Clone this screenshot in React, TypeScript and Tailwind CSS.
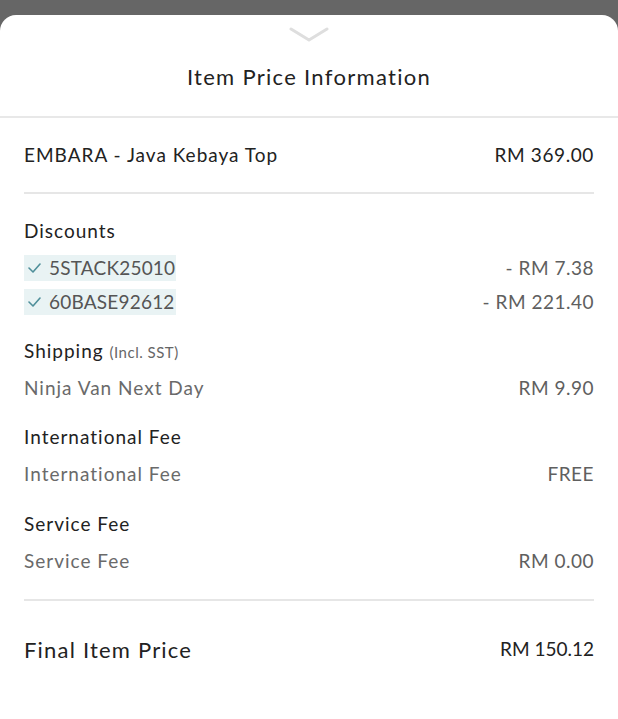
import React from 'react';

const font = { fontFamily: 'Lato, "Noto Sans", sans-serif' };

function Row({ label, value, strong }: { label: React.ReactNode; value?: string; strong?: boolean }) {
  return (
    <div className="flex h-[37px] items-center justify-between">
      <div
        className={
          strong
            ? 'text-[19px] tracking-[1px] text-[#222]'
            : 'text-[19px] tracking-[1px] text-[#6a6a6a]'
        }
      >
        {label}
      </div>
      {value && <div className="text-[19px] tracking-[0.5px] text-[#5f5f5f]">{value}</div>}
    </div>
  );
}

function CodeRow({ code, amount }: { code: string; amount: string }) {
  return (
    <div className="flex h-[34px] items-center justify-between">
      <span className="inline-flex h-[26px] items-center gap-[8px] bg-[#e9f3f4] pl-[4px] pr-[1px] text-[19px] tracking-[0.2px] text-[#555]">
        <svg width="13" height="10" viewBox="0 0 13 10" fill="none">
          <path d="M1 5l4 4 7-8" stroke="#4f8f9a" strokeWidth="1.6" strokeLinecap="round" strokeLinejoin="round" />
        </svg>
        {code}
      </span>
      <span className="text-[19px] tracking-[0.5px] text-[#5f5f5f]">{amount}</span>
    </div>
  );
}

export default function App() {
  return (
    <div className="min-h-screen bg-[#666]" style={font}>
      <div className="h-[15px]" />
      <div className="min-h-[704px] rounded-t-2xl bg-white">
        <div className="flex flex-col items-center pt-3 pb-[25px]">
          <svg width="40" height="15" viewBox="0 0 40 15" fill="none">
            <path d="M2 2l18 11 18-11" stroke="#dedede" strokeWidth="3" strokeLinecap="round" strokeLinejoin="round" />
          </svg>
          <h1 className="mt-[21px] text-[22px] leading-[28px] tracking-[1.3px] text-[#222]">Item Price Information</h1>
        </div>
        <div className="h-[2px] bg-[#e8e8e8]" />
        <div className="px-6">
          <div className="flex h-[74px] items-center justify-between text-[19px] text-[#222]">
            <span className="tracking-[1px]">EMBARA - Java Kebaya Top</span>
            <span className="tracking-[0.6px]">RM 369.00</span>
          </div>
          <div className="h-[2px] bg-[#e6e6e6]" />
          <div className="pt-[19px] pb-[19px]">
            <Row label="Discounts" strong />
            <div className="mt-px">
              <CodeRow code="5STACK25010" amount="- RM 7.38" />
              <CodeRow code="60BASE92612" amount="- RM 221.40" />
            </div>
            <div className="mt-[14px]">
              <Row
                label={
                  <span>
                    Shipping <span className="text-[15px] tracking-[0.5px] text-[#666]">(Incl. SST)</span>
                  </span>
                }
                strong
              />
              <Row label="Ninja Van Next Day" value="RM 9.90" />
            </div>
            <div className="mt-[12px]">
              <Row label="International Fee" strong />
              <Row label="International Fee" value="FREE" />
            </div>
            <div className="mt-[13px]">
              <Row label="Service Fee" strong />
              <Row label="Service Fee" value="RM 0.00" />
            </div>
          </div>
          <div className="h-[2px] bg-[#e6e6e6]" />
          <div className="flex h-[96px] items-center justify-between text-[#222]">
            <span className="text-[22px] tracking-[1.2px]">Final Item Price</span>
            <span className="text-[19px]">RM 150.12</span>
          </div>
        </div>
      </div>
    </div>
  );
}
